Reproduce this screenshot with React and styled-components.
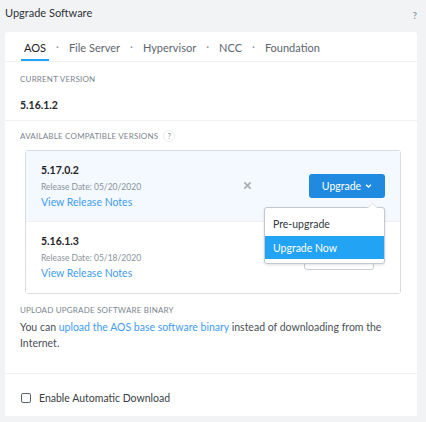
import React from "react";
import styled, { createGlobalStyle } from "styled-components";

const GlobalStyle = createGlobalStyle`
  html, body {
    margin: 0;
    padding: 0;
    background: #f2f3f5;
    font-family: "Lato", "Open Sans", sans-serif;
    color: #2b2f33;
  }
`;

const tabs = ["AOS", "File Server", "Hypervisor", "NCC", "Foundation"];

const versions = [
  { id: "5.17.0.2", date: "05/20/2020", selected: true },
  { id: "5.16.1.3", date: "05/18/2020", selected: false },
];

export default function App() {
  return (
    <>
      <GlobalStyle />
      <Page>
        <Header>
          <HeaderTitle>Upgrade Software</HeaderTitle>
          <HeaderHelp>?</HeaderHelp>
        </Header>
        <Card>
          <TabBar>
            {tabs.map((t, i) => (
              <React.Fragment key={t}>
                {i > 0 && <TabDot>·</TabDot>}
                <Tab $active={i === 0}>{t}</Tab>
              </React.Fragment>
            ))}
          </TabBar>

          <Section $divider $pad="11px 16px 0 15px">
            <Label>Current Version</Label>
            <CurrentValue>5.16.1.2</CurrentValue>
          </Section>

          <Section>
            <Label>
              Available Compatible Versions <CircleHelp>?</CircleHelp>
            </Label>
            <VersionBox>
              {versions.map((v) => (
                <VersionRow key={v.id} $selected={v.selected}>
                  <VersionInfo>
                    <VersionName>{v.id}</VersionName>
                    <ReleaseDate>Release Date: {v.date}</ReleaseDate>
                    <Link>View Release Notes</Link>
                  </VersionInfo>
                  {v.selected ? (
                    <Actions>
                      <CloseIcon viewBox="0 0 10 10">
                        <path d="M1.5 1.5 L8.5 8.5 M8.5 1.5 L1.5 8.5" />
                      </CloseIcon>
                      <UpgradeButton>
                        Upgrade
                        <Chevron viewBox="0 0 8 6">
                          <path d="M1.2 1.6 L4 4.2 L6.8 1.6" />
                        </Chevron>
                      </UpgradeButton>
                      <Menu>
                        <MenuItem>Pre-upgrade</MenuItem>
                        <MenuItem $active>Upgrade Now</MenuItem>
                      </Menu>
                    </Actions>
                  ) : (
                    <Actions>
                      <OutlineButton>Upgrade</OutlineButton>
                    </Actions>
                  )}
                </VersionRow>
              ))}
            </VersionBox>
          </Section>

          <Section $divider $pad="10px 16px 22px 15px">
            <Label>Upload Upgrade Software Binary</Label>
            <BodyText>
              You can <InlineLink>upload the AOS base software binary</InlineLink>{" "}
              instead of downloading from the Internet.
            </BodyText>
          </Section>

          <Footer>
            <CheckBox />
            <CheckLabel>Enable Automatic Download</CheckLabel>
          </Footer>
        </Card>
      </Page>
    </>
  );
}

const Page = styled.div`
  width: 426px;
  height: 422px;
  padding: 0 9px 0 5px;
  box-sizing: border-box;
`;

const Header = styled.div`
  height: 32px;
  display: flex;
  align-items: flex-start;
  justify-content: space-between;
`;

const HeaderTitle = styled.div`
  font-size: 11px;
  line-height: 14px;
  padding-top: 6px;
  color: #2f3338;
`;

const HeaderHelp = styled.div`
  font-size: 9px;
  font-weight: 700;
  color: #8d99a6;
  padding-top: 10px;
`;

const Card = styled.div`
  background: #ffffff;
  border-radius: 3px 3px 0 0;
  height: 384px;
  display: flex;
  flex-direction: column;
`;

const TabBar = styled.div`
  height: 30px;
  display: flex;
  align-items: stretch;
  padding-left: 16px;
  border-bottom: 1px solid #eef0f3;
  box-sizing: border-box;
`;

const Tab = styled.div`
  display: flex;
  align-items: center;
  padding: 1px 3px 0;
  font-size: 11px;
  color: ${(p) => (p.$active ? "#1f2327" : "#5d6670")};
  box-shadow: ${(p) => (p.$active ? "inset 0 -2px 0 #22a5f7" : "none")};
`;

const TabDot = styled.div`
  display: flex;
  align-items: center;
  padding: 0 7px;
  font-size: 11px;
  color: #8a939c;
`;

const Section = styled.div`
  padding: ${(p) => p.$pad || "9px 16px 0 15px"};
  border-bottom: ${(p) => (p.$divider ? "1px solid #eef0f3" : "none")};
`;

const Label = styled.div`
  font-size: 8px;
  line-height: 12px;
  text-transform: uppercase;
  letter-spacing: 0.2px;
  color: #7b858f;
  display: flex;
  align-items: center;
`;

const CircleHelp = styled.span`
  display: inline-flex;
  align-items: center;
  justify-content: center;
  width: 10px;
  height: 10px;
  margin-left: 5px;
  border: 1px solid #eceef1;
  border-radius: 50%;
  font-size: 7px;
  color: #7b858f;
`;

const CurrentValue = styled.div`
  font-size: 10.5px;
  font-weight: 700;
  color: #23272b;
  padding: 13px 0 8px;
  line-height: 14px;
`;

const VersionBox = styled.div`
  margin: 8px 0 0 5px;
  border: 1px solid #d9dce1;
  border-radius: 3px;
`;

const VersionRow = styled.div`
  height: 71px;
  display: flex;
  align-items: center;
  justify-content: space-between;
  padding: 0 15px;
  box-sizing: border-box;
  background: ${(p) => (p.$selected ? "#f3f9fe" : "#ffffff")};
  border-bottom: ${(p) => (p.$selected ? "1px solid #eef0f3" : "none")};
  position: relative;
  z-index: ${(p) => (p.$selected ? 2 : 1)};
`;

const VersionInfo = styled.div`
  display: flex;
  flex-direction: column;
`;

const VersionName = styled.div`
  font-size: 10.5px;
  font-weight: 700;
  color: #1f2327;
  line-height: 14px;
`;

const ReleaseDate = styled.div`
  font-size: 8.5px;
  color: #8a939c;
  line-height: 14px;
  margin-top: 3px;
`;

const Link = styled.div`
  font-size: 10.5px;
  color: #3f9cf2;
  line-height: 15px;
  margin-top: 1px;
`;

const InlineLink = styled.span`
  color: #3f9cf2;
`;

const Actions = styled.div`
  display: flex;
  align-items: center;
  position: relative;
`;

const CloseIcon = styled.svg`
  width: 9px;
  height: 9px;
  margin-right: 57px;
  margin-top: -1px;
  fill: none;
  stroke: #a9b0b8;
  stroke-width: 2;
`;

const UpgradeButton = styled.button`
  width: 76px;
  height: 24px;
  border: none;
  border-radius: 3px;
  background: #1f8ae0;
  color: #ffffff;
  font-family: inherit;
  font-size: 10.5px;
  display: flex;
  align-items: center;
  justify-content: center;
  gap: 4px;
  padding: 0;
`;

const Chevron = styled.svg`
  width: 7px;
  height: 6px;
  fill: none;
  stroke: #ffffff;
  stroke-width: 1.5;
`;

const OutlineButton = styled.button`
  width: 70px;
  height: 24px;
  margin-right: 11px;
  border: 1px solid #c9ced6;
  border-radius: 3px;
  background: #ffffff;
  color: #3a3f45;
  font-family: inherit;
  font-size: 10.5px;
  padding: 0 0 6px;
`;

const Menu = styled.div`
  position: absolute;
  top: 33px;
  right: 0;
  width: 121px;
  box-sizing: border-box;
  padding: 3px 0 4px;
  background: #ffffff;
  border: 1px solid #c4c9d1;
  border-radius: 3px;
  box-shadow: 0 1px 3px rgba(0, 0, 0, 0.12);
  &::before {
    content: "";
    position: absolute;
    top: -4px;
    right: 8px;
    width: 6px;
    height: 6px;
    background: #ffffff;
    border-left: 1px solid #e1e4e8;
    border-top: 1px solid #e1e4e8;
    transform: rotate(45deg);
  }
`;

const MenuItem = styled.div`
  height: ${(p) => (p.$active ? "23px" : "25px")};
  display: flex;
  align-items: center;
  padding-left: 8px;
  font-size: 10.5px;
  position: relative;
  color: ${(p) => (p.$active ? "#ffffff" : "#33383d")};
  background: ${(p) => (p.$active ? "#22a3f4" : "transparent")};
`;

const BodyText = styled.div`
  margin-top: 3px;
  font-size: 10.5px;
  line-height: 16px;
  color: #4a5057;
`;

const Footer = styled.div`
  flex: 1;
  display: flex;
  align-items: center;
  padding: 6px 16px 0;
`;

const CheckBox = styled.span`
  width: 8px;
  height: 8px;
  border: 1px solid #59626c;
  border-radius: 2px;
  margin-right: 8px;
`;

const CheckLabel = styled.span`
  font-size: 10.5px;
  color: #3a3f45;
`;
